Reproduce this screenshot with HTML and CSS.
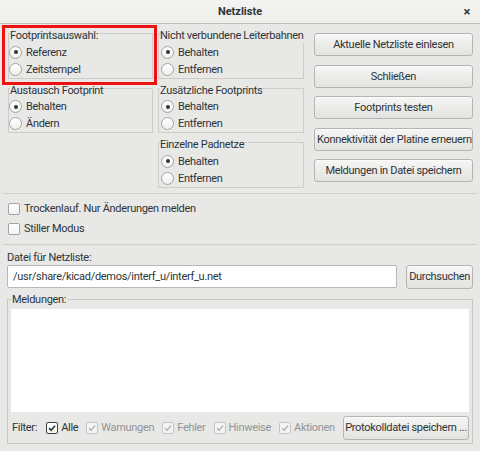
FILE: index.html
```html
<!DOCTYPE html>
<html lang="de">
<head>
<meta charset="utf-8">
<title>Netzliste</title>
<link rel="stylesheet" href="styles.css">
</head>
<body>
<div class="window">
  <header class="titlebar">
    <span class="title">Netzliste</span>
    <span class="close">×</span>
  </header>
  <main class="content">
    <div class="top">
      <div class="col col-first">
        <fieldset class="group">
          <legend>Footprintsauswahl:</legend>
          <div class="opt"><span class="radio on"></span>Referenz</div>
          <div class="opt"><span class="radio"></span>Zeitstempel</div>
        </fieldset>
        <fieldset class="group">
          <legend>Austausch Footprint</legend>
          <div class="opt"><span class="radio on"></span>Behalten</div>
          <div class="opt"><span class="radio"></span>Ändern</div>
        </fieldset>
      </div>
      <div class="col col-second">
        <fieldset class="group">
          <legend>Nicht verbundene Leiterbahnen</legend>
          <div class="opt"><span class="radio on"></span>Behalten</div>
          <div class="opt"><span class="radio"></span>Entfernen</div>
        </fieldset>
        <fieldset class="group">
          <legend>Zusätzliche Footprints</legend>
          <div class="opt"><span class="radio on"></span>Behalten</div>
          <div class="opt"><span class="radio"></span>Entfernen</div>
        </fieldset>
        <fieldset class="group">
          <legend>Einzelne Padnetze</legend>
          <div class="opt"><span class="radio on"></span>Behalten</div>
          <div class="opt"><span class="radio"></span>Entfernen</div>
        </fieldset>
      </div>
      <div class="buttons">
        <button class="btn">Aktuelle Netzliste einlesen</button>
        <button class="btn">Schließen</button>
        <button class="btn">Footprints testen</button>
        <button class="btn">Konnektivität der Platine erneuern</button>
        <button class="btn">Meldungen in Datei speichern</button>
      </div>
    </div>
    <hr class="sep">
    <div class="checks">
      <div class="chk-row"><span class="check"></span>Trockenlauf. Nur Änderungen melden</div>
      <div class="chk-row"><span class="check"></span>Stiller Modus</div>
    </div>
    <hr class="sep">
    <div class="file-label">Datei für Netzliste:</div>
    <div class="file-row">
      <div class="input">/usr/share/kicad/demos/interf_u/interf_u.net</div>
      <button class="btn btn-browse">Durchsuchen</button>
    </div>
    <fieldset class="messages">
      <legend>Meldungen:</legend>
      <div class="log"></div>
      <div class="filter">
        <span class="filter-label">Filter:</span>
        <span class="fitem"><span class="check checked"><svg viewBox="0 0 12 12" width="12" height="12"><path d="M2.5 6.2 L5 8.7 L9.6 3.2" fill="none" stroke="currentColor" stroke-width="1.9"/></svg></span>Alle</span>
        <span class="fitem disabled"><span class="check checked"><svg viewBox="0 0 12 12" width="12" height="12"><path d="M2.5 6.2 L5 8.7 L9.6 3.2" fill="none" stroke="currentColor" stroke-width="1.6"/></svg></span>Warnungen</span>
        <span class="fitem disabled"><span class="check checked"><svg viewBox="0 0 12 12" width="12" height="12"><path d="M2.5 6.2 L5 8.7 L9.6 3.2" fill="none" stroke="currentColor" stroke-width="1.6"/></svg></span>Fehler</span>
        <span class="fitem disabled"><span class="check checked"><svg viewBox="0 0 12 12" width="12" height="12"><path d="M2.5 6.2 L5 8.7 L9.6 3.2" fill="none" stroke="currentColor" stroke-width="1.6"/></svg></span>Hinweise</span>
        <span class="fitem disabled"><span class="check checked"><svg viewBox="0 0 12 12" width="12" height="12"><path d="M2.5 6.2 L5 8.7 L9.6 3.2" fill="none" stroke="currentColor" stroke-width="1.6"/></svg></span>Aktionen</span>
        <button class="btn btn-save">Protokolldatei speichern ...</button>
      </div>
    </fieldset>
  </main>
  <div class="highlight"></div>
</div>
</body>
</html>
```
FILE: styles.css
```css
* { box-sizing: border-box; }
html, body { margin: 0; padding: 0; }
body {
  width: 480px;
  height: 451px;
  overflow: hidden;
  background: #e8e8e7;
  font-family: Roboto, "Noto Sans", sans-serif;
  font-size: 11px;
  letter-spacing: -0.3px;
  color: #2e3436;
}
.window {
  position: relative;
  width: 480px;
  height: 451px;
  background: #e8e8e7;
}
.titlebar {
  height: 24px;
  background: linear-gradient(#f4f4f3, #eeeeed);
  border-bottom: 1px solid #bfbfbd;
  display: flex;
  align-items: center;
  justify-content: center;
  position: relative;
}
.title {
  font-weight: bold;
  font-size: 11px;
  letter-spacing: 0;
}
.close {
  position: absolute;
  right: 10px;
  top: 5px;
  font-size: 13px;
  font-weight: bold;
  line-height: 14px;
}
.content {
  padding: 0 7px;
}
.top {
  display: grid;
  grid-template-columns: 146px 146px 164px;
  column-gap: 5px;
}
.col-first { margin-left: 1px; }
.col {
  display: flex;
  flex-direction: column;
}
.group {
  margin: 0;
  padding: 0;
  border: 1px solid #cdcdcc;
  min-width: 0;
}
.group legend {
  padding: 4px 0 0 0;
  margin-left: 1px;
  line-height: 15px;
  white-space: nowrap;
}
.opt {
  height: 17.25px;
  display: flex;
  align-items: center;
  gap: 4px;
  padding-top: 1px;
}
.col-second .opt { padding-left: 2px; }
.radio {
  width: 13px;
  height: 13px;
  border-radius: 50%;
  border: 1px solid #a3a4a2;
  background: linear-gradient(#ffffff, #f0f0ef);
  display: inline-block;
  flex: none;
  position: relative;
}
.radio.on::after {
  content: "";
  position: absolute;
  left: 3.5px;
  top: 3.5px;
  width: 4px;
  height: 4px;
  border-radius: 50%;
  background: #2e3436;
}
.buttons {
  display: flex;
  flex-direction: column;
  gap: 8.5px;
  padding-top: 9px;
  margin-left: 5px;
}
.btn {
  font: inherit;
  letter-spacing: inherit;
  color: #2e3436;
  height: 23px;
  padding: 0 2px;
  border: 1px solid #b4b5b3;
  border-radius: 3px;
  background: linear-gradient(#f6f6f5, #e2e2e0);
  white-space: nowrap;
  box-shadow: inset 0 1px #fbfbfb;
}
.sep {
  margin: 5px -4px 0 -4px;
  border: 0;
  border-top: 1px solid #cfcfce;
  height: 0;
}
.checks {
  padding-top: 5px;
  padding-left: 1px;
}
.chk-row {
  height: 20px;
  display: flex;
  align-items: center;
  gap: 4px;
}
.check {
  width: 12px;
  height: 12px;
  border: 1px solid #a3a4a2;
  border-radius: 2px;
  background: linear-gradient(#ffffff, #f3f3f2);
  display: inline-flex;
  align-items: center;
  justify-content: center;
  flex: none;
}
.check svg { display: block; width: 10px; height: 10px; }
.file-label {
  margin-top: 5px;
  line-height: 15px;
}
.file-row {
  display: flex;
  align-items: center;
  gap: 9px;
}
.input {
  width: 391px;
  height: 23px;
  background: #ffffff;
  border: 1px solid #b8b9b7;
  border-radius: 2px;
  padding: 0 5px;
  display: flex;
  align-items: center;
  white-space: nowrap;
}
.btn-browse {
  height: 24px;
  width: 67px;
  padding: 0;
}
.messages {
  margin: 4px 0 0 0;
  padding: 0 3px 3px 3px;
  border: 1px solid #c6c6c5;
  min-width: 0;
}
.messages legend {
  padding: 0 1px;
  margin-left: 0;
  line-height: 14px;
}
.log {
  height: 103px;
  background: #ffffff;
  margin-top: 2px;
}
.filter {
  display: flex;
  align-items: center;
  gap: 8px;
  padding-top: 4px;
  padding-left: 1px;
}
.filter-label { margin-right: 1px; }
.fitem {
  display: inline-flex;
  align-items: center;
  gap: 3px;
}
.check.checked { color: #2e3436; border-color: #3c4042; }
.fitem.disabled { color: #929595; }
.fitem.disabled .check { color: #aeb0b0; border-color: #c4c5c4; background: #f3f3f2; }
.btn-save {
  margin-left: auto;
  flex: none;
  height: 24px;
  width: 126px;
  padding: 0;
}
.highlight {
  position: absolute;
  left: 2px;
  top: 25px;
  width: 155px;
  height: 60px;
  border: 3px solid #ee1111;
  pointer-events: none;
}
```
